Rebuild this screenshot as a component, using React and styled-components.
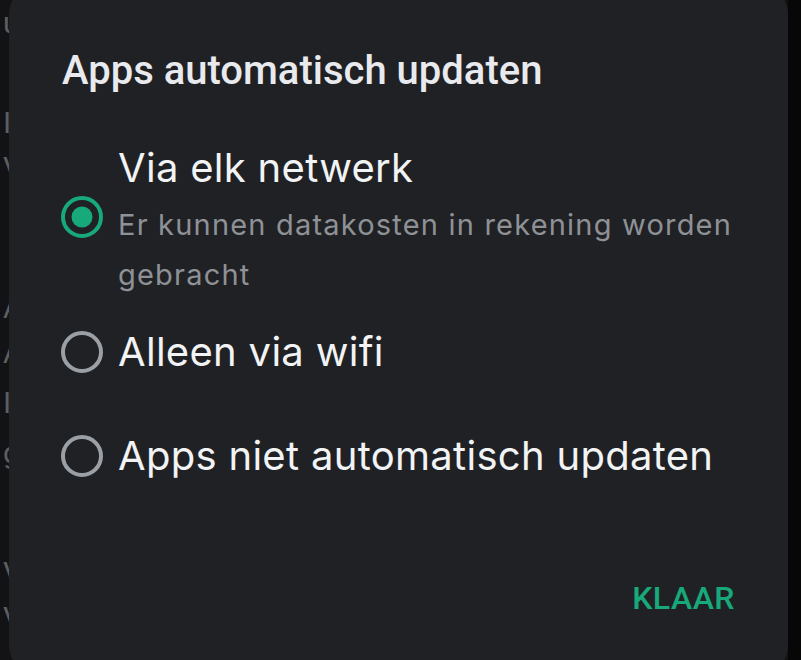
import React from 'react';
import styled, { createGlobalStyle } from 'styled-components';

const GlobalStyle = createGlobalStyle`
  html, body {
    margin: 0;
    padding: 0;
    background: #070707;
  }
  body {
    font-family: Roboto, "Liberation Sans", sans-serif;
  }
`;

const Screen = styled.div`
  position: relative;
  width: 788px;
  height: 660px;
  overflow: hidden;
  background: #131315;
`;

const Underlay = styled.ul`
  list-style: none;
  margin: 0;
  padding: 0 0 0 3px;
  display: flex;
  flex-direction: column;
`;

const UnderlayRow = styled.li`
  height: ${(p) => p.h}px;
  display: flex;
  align-items: flex-end;
  font-size: 30px;
  color: #5d5e62;
  white-space: nowrap;
`;

const Dialog = styled.section`
  position: absolute;
  left: 9px;
  right: 0;
  top: -14px;
  bottom: -14px;
  box-sizing: border-box;
  padding: 61px 53px 0 53px;
  background: #202124;
  border-radius: 28px;
  display: flex;
  flex-direction: column;
`;

const Title = styled.h2`
  margin: 0;
  font-size: 40px;
  line-height: 48px;
  font-weight: 500;
  color: #e8eaed;
`;

const Options = styled.div`
  margin-top: 36px;
  display: flex;
  flex-direction: column;
`;

const Option = styled.label`
  display: flex;
  align-items: center;
  gap: 15px;
  min-height: 104px;
  padding: ${(p) => (p.tall ? '3px 0 0' : '3px 0')};
  box-sizing: border-box;
`;

const Radio = styled.span`
  position: relative;
  flex: none;
  width: 42px;
  height: 42px;
  box-sizing: border-box;
  border-radius: 50%;
  border: 4.5px solid ${(p) => (p.checked ? '#17a97a' : '#9aa0a6')};
  margin-left: -1px;

  &::after {
    content: '';
    display: ${(p) => (p.checked ? 'block' : 'none')};
    position: absolute;
    left: 50%;
    top: 50%;
    width: 21px;
    height: 21px;
    border-radius: 50%;
    background: #17a97a;
    transform: translate(-50%, -50%);
  }
`;

const OptionText = styled.div`
  display: flex;
  flex-direction: column;
  padding-top: ${(p) => (p.tall ? '8px' : '0')};
  font-family: Inter, Roboto, sans-serif;
`;

const Label = styled.span`
  font-size: 40px;
  line-height: 52px;
  letter-spacing: 0.3px;
  color: #f1f3f4;
`;

const Hint = styled.span`
  margin-top: 6px;
  font-size: 29px;
  line-height: 50px;
  letter-spacing: 1.2px;
  color: #8e9196;
`;

const Actions = styled.div`
  display: flex;
  justify-content: flex-end;
  margin-top: 70px;
`;

const TextButton = styled.button`
  border: 0;
  padding: 0;
  background: none;
  font-family: Roboto, "Liberation Sans", sans-serif;
  font-size: 32px;
  line-height: 40px;
  font-weight: 500;
  letter-spacing: 0.5px;
  color: #17a97a;
  cursor: pointer;
`;

const underlay = [
  { h: 40, t: 'u' },
  { h: 100, t: 'I' },
  { h: 45, t: 'V' },
  { h: 140, t: 'A' },
  { h: 45, t: 'A' },
  { h: 50, t: 'I' },
  { h: 50, t: 'g' },
  { h: 120, t: 'V' },
  { h: 45, t: 'V' },
];

const options = [
  {
    id: 'any',
    label: 'Via elk netwerk',
    hint: 'Er kunnen datakosten in rekening worden gebracht',
    checked: true,
  },
  { id: 'wifi', label: 'Alleen via wifi' },
  { id: 'off', label: 'Apps niet automatisch updaten' },
];

const App = () => (
  <>
    <GlobalStyle />
    <Screen>
      <Underlay>
        {underlay.map((row, i) => (
          <UnderlayRow key={i} h={row.h}>
            {row.t}
          </UnderlayRow>
        ))}
      </Underlay>
      <Dialog>
        <Title>Apps automatisch updaten</Title>
        <Options>
          {options.map((opt) => (
            <Option key={opt.id} tall={!!opt.hint}>
              <Radio checked={opt.checked} />
              <OptionText tall={!!opt.hint}>
                <Label>{opt.label}</Label>
                {opt.hint && <Hint>{opt.hint}</Hint>}
              </OptionText>
            </Option>
          ))}
        </Options>
        <Actions>
          <TextButton type="button">KLAAR</TextButton>
        </Actions>
      </Dialog>
    </Screen>
  </>
);

export default App;
